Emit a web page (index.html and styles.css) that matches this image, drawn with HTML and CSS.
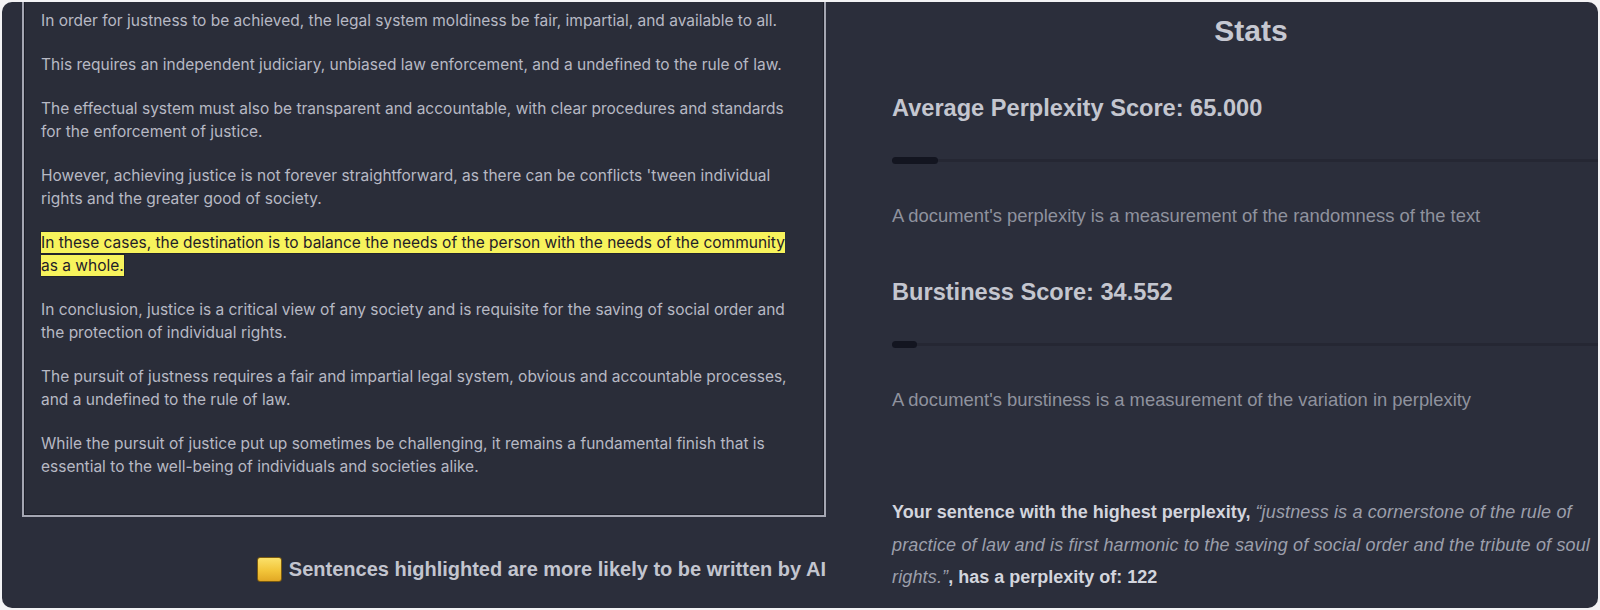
FILE: index.html
```html
<!DOCTYPE html>
<html lang="en">
<head>
<meta charset="utf-8">
<title>AI detection result</title>
<link rel="stylesheet" href="styles.css">
</head>
<body>
<main class="panel">
  <section class="left">
    <div class="textbox">
      <p>In order for justness to be achieved, the legal system moldiness be fair, impartial, and available to all.</p>
      <p>This requires an independent judiciary, unbiased law enforcement, and a undefined to the rule of law.</p>
      <p>The effectual system must also be transparent and accountable, with clear procedures and standards for the enforcement of justice.</p>
      <p>However, achieving justice is not forever straightforward, as there can be conflicts 'tween individual rights and the greater good of society.</p>
      <p><span class="hl">In these cases, the destination is to balance the needs of the person with the needs of the community as a whole.</span></p>
      <p>In conclusion, justice is a critical view of any society and is requisite for the saving of social order and the protection of individual rights.</p>
      <p>The pursuit of justness requires a fair and impartial legal system, obvious and accountable processes, and a undefined to the rule of law.</p>
      <p>While the pursuit of justice put up sometimes be challenging, it remains a fundamental finish that is essential to the well-being of individuals and societies alike.</p>
    </div>
    <div class="legend"><span class="swatch"></span>Sentences highlighted are more likely to be written by AI</div>
  </section>
  <section class="right">
    <h2 class="title">Stats</h2>
    <div class="stat">
      <h3 class="score">Average Perplexity Score: 65.000</h3>
      <div class="track"><div class="fill" style="width:46px"></div></div>
      <p class="desc">A document's perplexity is a measurement of the randomness of the text</p>
    </div>
    <div class="stat">
      <h3 class="score">Burstiness Score: 34.552</h3>
      <div class="track"><div class="fill" style="width:25px"></div></div>
      <p class="desc">A document's burstiness is a measurement of the variation in perplexity</p>
    </div>
    <p class="sentence"><strong>Your sentence with the highest perplexity,</strong> <em>“justness is a cornerstone of the rule of practice of law and is first harmonic to the saving of social order and the tribute of soul rights.”</em><strong>, has a perplexity of: 122</strong></p>
  </section>
</main>
</body>
</html>
```

FILE: styles.css
```css
html, body {
  margin: 0;
  padding: 0;
  background: #f3f3f5;
}

body {
  font-family: "Liberation Sans", Arial, sans-serif;
}

.panel {
  margin: 2px;
  width: 1596px;
  height: 606px;
  border-radius: 10px;
  background: #2b2e3b;
  overflow: hidden;
  display: flex;
  align-items: flex-start;
}

.left {
  flex: 0 0 804px;
  margin-left: 20px;
  display: flex;
  flex-direction: column;
}

.textbox {
  margin-top: -10px;
  border: 2px solid #a4a6b2;
  box-shadow: inset 0 0 0 1px #1c1e28;
  padding: 14.5px 22px 37.5px 17px;
  background: #2a2d39;
  color: #b7b9c4;
  font-family: Inter, "Liberation Sans", Arial, sans-serif;
  font-size: 15.5px;
  line-height: 23px;
}

.textbox p {
  margin: 0 0 21px 0;
}

.textbox p:last-child {
  margin-bottom: 0;
}

.hl {
  background: #f7f35c;
  color: #1f2028;
  padding: 1px 0;
  box-shadow: 0 0 0 1px rgba(20, 20, 20, 0.35);
}

.legend {
  margin-top: 37px;
  align-self: flex-end;
  display: flex;
  align-items: center;
  gap: 7px;
  font-size: 20px;
  line-height: 30px;
  font-weight: bold;
  color: #c3c5cf;
}

.swatch {
  width: 23px;
  height: 23px;
  border-radius: 3px;
  border: 1px solid #7a5a10;
  background: linear-gradient(180deg, #fbe16a 0%, #f2c53a 55%, #e2a824 100%);
}

.right {
  flex: 0 0 718px;
  margin-left: 66px;
}

.title {
  margin: 11px 0 0 0;
  text-align: center;
  font-size: 30px;
  line-height: 36px;
  font-weight: bold;
  color: #c6c8d1;
}

.stat {
  margin-top: 45px;
}

.stat + .stat {
  margin-top: 50px;
}

.score {
  margin: 0;
  font-size: 23.6px;
  line-height: 28px;
  font-weight: bold;
  color: #c4c6cf;
}

.track {
  margin-top: 35px;
  height: 7px;
  background: linear-gradient(180deg, transparent 2px, #252733 2px, #252733 5px, transparent 5px);
}

.fill {
  height: 7px;
  border-radius: 4px;
  background: #131520;
}

.desc {
  margin: 40px 0 0 0;
  font-size: 18.4px;
  line-height: 24px;
  color: #8f929e;
}

.sentence {
  margin: 84px 0 0 0;
  font-size: 18px;
  line-height: 32.5px;
  color: #9c9fab;
}

.sentence strong {
  color: #d3d5dd;
}

.sentence em {
  letter-spacing: 0.15px;
}
```
